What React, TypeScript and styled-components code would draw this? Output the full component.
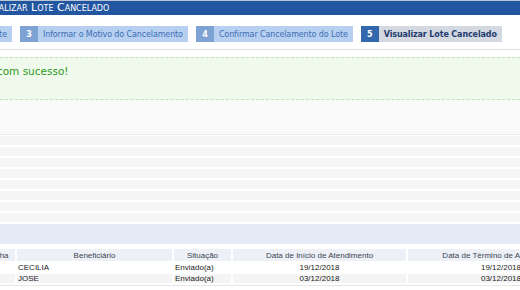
import React from "react";
import styled, { createGlobalStyle } from "styled-components";

const GlobalStyle = createGlobalStyle`
  html, body {
    margin: 0;
    padding: 0;
    background: #ffffff;
    overflow: hidden;
  }
`;

const Page = styled.div`
  width: 520px;
  height: 290px;
  overflow: hidden;
  background: #ffffff;
  display: flex;
  flex-direction: column;
`;

const TitleBar = styled.div`
  height: 14px;
  border-top: 1px solid #b9c4d4;
  background: #2356a1;
  color: #ffffff;
  font-family: "DejaVu Sans", Verdana, sans-serif;
  font-size: 11px;
  font-variant: small-caps;
  line-height: 13px;
  white-space: nowrap;
  overflow: hidden;

  span {
    display: inline-block;
    margin-left: -22px;
  }
`;

const Stepper = styled.div`
  display: flex;
  gap: 8px;
  margin: 11px 0 0 -76px;
  height: 16px;
  font-family: "DejaVu Sans", Verdana, sans-serif;
  font-size: 8px;
  letter-spacing: -0.12px;
  white-space: nowrap;
`;

const Step = styled.div`
  display: flex;
`;

const StepNumber = styled.div<{ $active?: boolean }>`
  width: 18px;
  display: flex;
  align-items: center;
  justify-content: center;
  background: ${p => (p.$active ? "#3468ad" : "#7ea2d3")};
  color: #ffffff;
  font-weight: bold;
`;

const StepLabel = styled.div<{ $active?: boolean }>`
  display: flex;
  align-items: center;
  padding: 0 5px;
  background: ${p => (p.$active ? "#d4d8e0" : "#b7d0f1")};
  color: ${p => (p.$active ? "#1f3b6d" : "#3c6cb4")};
  font-weight: ${p => (p.$active ? "bold" : "normal")};
`;

const Divider = styled.div`
  margin-top: 7px;
  border-top: 1px solid #dddddd;
`;

const SuccessBox = styled.div`
  margin-top: 7px;
  height: 41px;
  border-top: 1px dashed #bfe4b6;
  border-bottom: 1px dashed #bfe4b6;
  background: #eff9ec;
  display: flex;
  align-items: center;
  overflow: hidden;
  white-space: nowrap;
  font-family: "DejaVu Sans", Verdana, sans-serif;
  font-size: 10.5px;
  color: #2f9a1c;

  span {
    margin-left: -86px;
    margin-top: -15px;
  }
`;

const FormArea = styled.div`
  height: 34px;
  background: #fafafa;
  border-bottom: 1px solid #ebebeb;
`;

const StripeList = styled.div`
  display: flex;
  flex-direction: column;
  gap: 2px;
  padding: 1px 0 2px;
  background: #ffffff;
`;

const Stripe = styled.div`
  height: 9px;
  background: #f5f5f5;
`;

const Band = styled.div`
  height: 20px;
  background: #e4ebf6;
`;

const Table = styled.table`
  margin: 3px 0 0 -23px;
  border-collapse: separate;
  border-spacing: 2px;
  table-layout: fixed;
  width: 619px;
  font-family: "Liberation Sans", Arial, sans-serif;
  font-size: 8px;
  color: #1a1a1a;
  border-bottom: 1px solid #e6e6e6;

  th {
    background: #edf1f7;
    color: #3d4450;
    font-weight: normal;
    height: 12px;
    padding: 0;
    text-align: center;
  }

  td {
    height: 9px;
    padding: 0 1px;
    line-height: 9px;
  }
`;

const Row = styled.tr<{ $odd?: boolean }>`
  td {
    background: ${p => (p.$odd ? "#f4f4f4" : "#ffffff")};
  }
`;

const Cell = styled.td<{ $center?: boolean }>`
  text-align: ${p => (p.$center ? "center" : "left")};
`;

interface Atendimento {
  beneficiario: string;
  situacao: string;
  inicio: string;
  termino: string;
}

const atendimentos: Array<Atendimento> = [
  { beneficiario: "CECILIA", situacao: "Enviado(a)", inicio: "19/12/2018", termino: "19/12/2018" },
  { beneficiario: "JOSE", situacao: "Enviado(a)", inicio: "03/12/2018", termino: "03/12/2018" },
];

const steps = [
  { n: 2, label: "Selecionar Lote" },
  { n: 3, label: "Informar o Motivo do Cancelamento" },
  { n: 4, label: "Confirmar Cancelamento do Lote" },
  { n: 5, label: "Visualizar Lote Cancelado", active: true },
];

const App: React.FC = () => {
  return (
    <Page>
      <GlobalStyle />
      <TitleBar>
        <span>Visualizar Lote Cancelado</span>
      </TitleBar>
      <Stepper>
        {steps.map(s => (
          <Step key={s.n}>
            <StepNumber $active={s.active}>{s.n}</StepNumber>
            <StepLabel $active={s.active}>{s.label}</StepLabel>
          </Step>
        ))}
      </Stepper>
      <Divider />
      <SuccessBox>
        <span>Lote cancelado com sucesso!</span>
      </SuccessBox>
      <FormArea />
      <StripeList>
        {Array.from({ length: 8 }).map((_, i) => (
          <Stripe key={i} />
        ))}
      </StripeList>
      <Band />
      <Table>
        <colgroup>
          <col style={{ width: 36 }} />
          <col style={{ width: 155 }} />
          <col style={{ width: 57 }} />
          <col style={{ width: 173 }} />
          <col style={{ width: 186 }} />
        </colgroup>
        <thead>
          <tr>
            <th>Senha</th>
            <th>Beneficiário</th>
            <th>Situação</th>
            <th>Data de Início de Atendimento</th>
            <th>Data de Término de Atendimento</th>
          </tr>
        </thead>
        <tbody>
          {atendimentos.map((a, i) => (
            <Row key={a.beneficiario} $odd={i % 2 === 1}>
              <Cell />
              <Cell>{a.beneficiario}</Cell>
              <Cell>{a.situacao}</Cell>
              <Cell $center>{a.inicio}</Cell>
              <Cell $center>{a.termino}</Cell>
            </Row>
          ))}
        </tbody>
      </Table>
    </Page>
  );
};

export default App;
